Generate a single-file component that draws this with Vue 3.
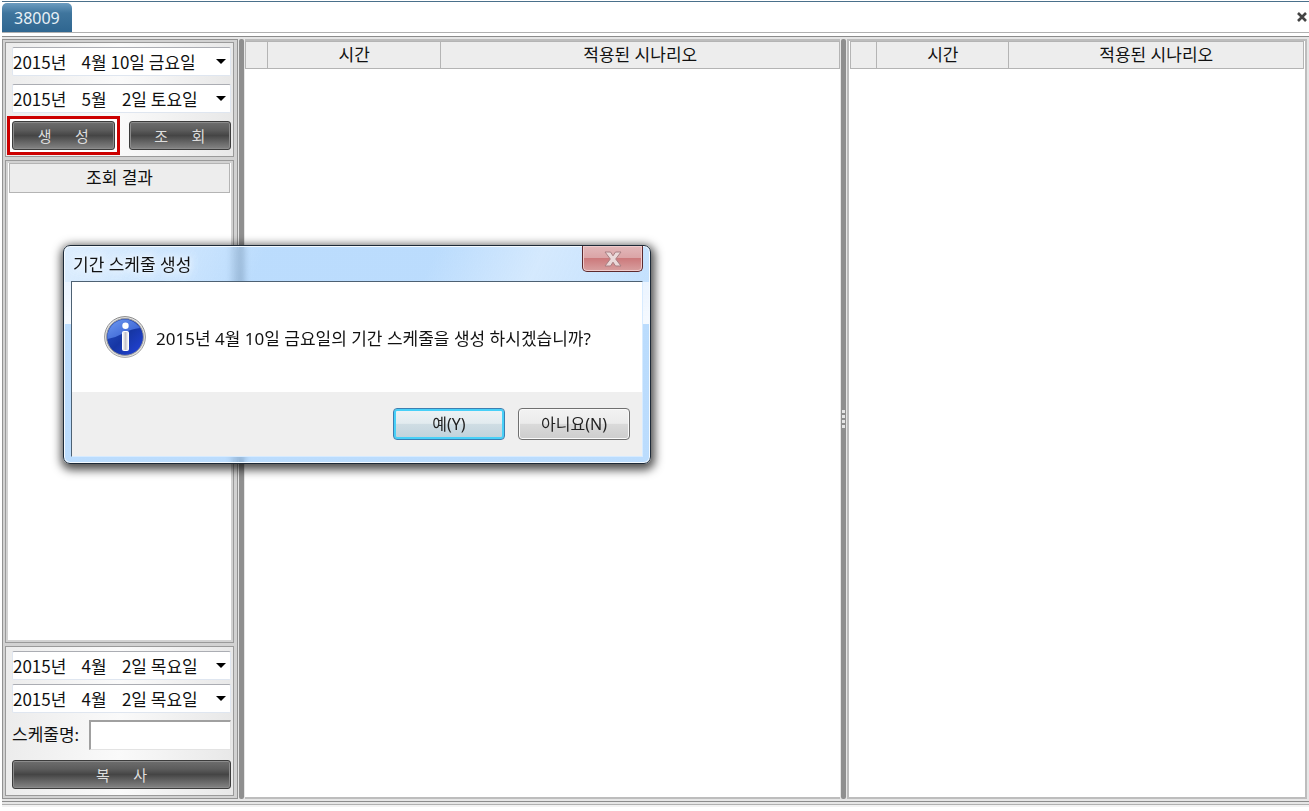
<script setup>
import { ref } from 'vue'

const nb = '\u00a0'
const fromDate = `2015년${nb.repeat(4)}4월${nb}10일${nb}금요일`
const toDate = `2015년${nb.repeat(4)}5월${nb.repeat(4)}2일${nb}토요일`
const copyDate = `2015년${nb.repeat(4)}4월${nb.repeat(4)}2일${nb}목요일`
const gap = nb.repeat(6)

const scheduleName = ref('')
</script>

<template>
  <div class="app">
    <header class="tabs">
      <button type="button" class="tabs__tab">38009</button>
      <button type="button" class="tabs__close" aria-label="닫기">
        <svg width="10" height="10" viewBox="0 0 10 10">
          <path d="M1 1l8 8M9 1L1 9" stroke="#444" stroke-width="2.6" />
        </svg>
      </button>
    </header>

    <main class="work">
      <aside class="side">
        <section class="panel panel--search">
          <select class="date" aria-label="시작일">
            <option>{{ fromDate }}</option>
          </select>
          <select class="date" aria-label="종료일">
            <option>{{ toDate }}</option>
          </select>
          <div class="panel__row">
            <button type="button" class="btn btn--marked">생{{ gap }}성</button>
            <button type="button" class="btn">조{{ gap }}회</button>
          </div>
        </section>

        <section class="result">
          <h2 class="result__title">조회 결과</h2>
        </section>

        <section class="panel panel--copy">
          <select class="date" aria-label="원본 날짜">
            <option>{{ copyDate }}</option>
          </select>
          <select class="date" aria-label="대상 날짜">
            <option>{{ copyDate }}</option>
          </select>
          <div class="name">
            <label for="schedule-name">스케줄명:</label>
            <input id="schedule-name" v-model="scheduleName" type="text" />
          </div>
          <button type="button" class="btn">복{{ gap }}사</button>
        </section>
      </aside>

      <div class="splitter"></div>

      <section class="grid grid--main">
        <table>
          <thead>
            <tr>
              <th class="grid__mark"></th>
              <th class="grid__time">시간</th>
              <th>적용된 시나리오</th>
            </tr>
          </thead>
        </table>
      </section>

      <div class="splitter">
        <i v-for="n in 4" :key="n" class="splitter__dot"></i>
      </div>

      <section class="grid grid--sub">
        <table>
          <thead>
            <tr>
              <th class="grid__mark"></th>
              <th class="grid__time">시간</th>
              <th>적용된 시나리오</th>
            </tr>
          </thead>
        </table>
      </section>
    </main>

    <div class="dialog" role="dialog" aria-labelledby="dialog-title">
      <div class="dialog__bar">
        <h1 id="dialog-title" class="dialog__title">기간 스케줄 생성</h1>
        <button type="button" class="dialog__close" aria-label="닫기">
          <svg width="18" height="16" viewBox="0 0 18 16">
            <path
              d="M1 1h5.500L9 4.800 11.500 1H17l-5.300 7L17 15h-5.500L9 11.200 6.500 15H1l5.300-7z"
              fill="#ead9d9"
              stroke="#a87f82"
              stroke-width="1"
            />
          </svg>
        </button>
      </div>
      <div class="dialog__body">
        <div class="dialog__message">
          <svg class="dialog__icon" width="42" height="42" viewBox="0 0 42 42">
            <defs>
              <linearGradient id="ring" x1="0" y1="0" x2="0" y2="1">
                <stop offset="0" stop-color="#8a8a8a" />
                <stop offset="1" stop-color="#a8a8a8" />
              </linearGradient>
              <linearGradient id="ball" x1="0" y1="0" x2="1" y2="1">
                <stop offset="0" stop-color="#2a55c8" />
                <stop offset="0.5" stop-color="#1636a4" />
                <stop offset="1" stop-color="#2344dc" />
              </linearGradient>
              <linearGradient id="shine" x1="0" y1="0" x2="1" y2="1">
                <stop offset="0" stop-color="#6f9af0" />
                <stop offset="1" stop-color="#2d55cc" />
              </linearGradient>
              <linearGradient id="stem" x1="0" y1="0" x2="1" y2="0">
                <stop offset="0" stop-color="#fff" />
                <stop offset="0.5" stop-color="#c4c4cc" />
                <stop offset="1" stop-color="#fff" />
              </linearGradient>
            </defs>
            <circle cx="21" cy="21" r="20.400" fill="#e4e4e4" stroke="url(#ring)" />
            <circle cx="21" cy="21" r="18.400" fill="url(#ball)" stroke="#9a9a9a" />
            <path d="M3.500 23A17.600 17.600 0 0 1 36 12Q27 13 20 17T3.500 23z" fill="url(#shine)" />
            <circle cx="21.500" cy="9.800" r="3.200" fill="#fff" />
            <rect x="18.500" y="15.500" width="6" height="19" rx="1" fill="url(#stem)" stroke="#fff" />
          </svg>
          <p>2015년 4월 10일 금요일의 기간 스케줄을 생성 하시겠습니까?</p>
        </div>
        <div class="dialog__actions">
          <button type="button" class="choice choice--default">예(Y)</button>
          <button type="button" class="choice">아니요(N)</button>
        </div>
      </div>
    </div>
  </div>
</template>

<style>
body {
  background: #fff;
}
</style>

<style scoped>
.app {
  position: relative;
  display: flex;
  flex-direction: column;
  box-sizing: border-box;
  height: 100vh;
  padding: 1px 0 9px 2px;
  overflow: hidden;
  font-family: 'Noto Sans', 'Noto Sans CJK KR', sans-serif;
  font-size: 17px;
  color: #111;
}

button,
select,
input {
  box-sizing: border-box;
  margin: 0;
  font: inherit;
}

.tabs {
  display: flex;
  align-items: flex-start;
  justify-content: space-between;
  height: 30px;
  border-top: 1px solid #4a708b;
  border-bottom: 1px solid #b0b0b0;
}

.tabs__tab {
  height: 29px;
  margin-top: 1px;
  padding: 0 12px;
  border: 0;
  border-radius: 5px 5px 0 0;
  background: linear-gradient(#6c9cc0, #3f759d 35%, #2f6690);
  font-size: 16px;
  color: #e8f0f6;
}

.tabs__close {
  display: flex;
  margin: 10px 2px 0 0;
  padding: 0;
  border: 0;
  background: none;
}

.work {
  flex: 1;
  display: flex;
  min-height: 0;
  margin-top: 3px;
  padding: 2px 2px 2px 0;
  border-top: 1px solid #8c8c8c;
  border-bottom: 1px solid #8c8c8c;
  background: #e6e6e6;
  box-shadow: 0 2px 0 #e6e6e6, 0 3px 0 #b0b0b0, 0 5px 0 #f2f2f2;
}

.side {
  display: flex;
  flex-direction: column;
  box-sizing: border-box;
  width: 236px;
  flex: none;
  gap: 3px;
  padding: 2px 3px 2px 2px;
  border: 1px solid #929292;
  background: #d2d2d2;
}

.panel {
  display: flex;
  flex-direction: column;
  border: 1px solid #9a9a9a;
  padding: 4px 2px 6px 6px;
  background: linear-gradient(90deg, #ececec, #fafafa 50%, #e8e8e8);
}

.panel--search {
  gap: 8px;
}

.panel--copy {
  gap: 4px;
}

.panel__row {
  display: grid;
  grid-template-columns: 1fr 1fr;
  gap: 14px;
}

.date {
  width: 100%;
  height: 29px;
  padding: 0;
  border: 1px solid #dfe6f0;
  border-top-color: #abadb3;
  border-radius: 2px;
  appearance: none;
  background: #fff
    url("data:image/svg+xml,%3Csvg xmlns='http://www.w3.org/2000/svg' width='10' height='5'%3E%3Cpath d='M0 0h10L5 5z'/%3E%3C/svg%3E")
    no-repeat right 4px center;
  font-family: 'Noto Sans CJK KR', sans-serif;
  color: #111;
}

.btn {
  position: relative;
  height: 29px;
  padding: 0;
  border: 1px solid #3c3c3c;
  border-radius: 3px;
  background: linear-gradient(#6e6e6e, #5c5c5c 30%, #454545 50%, #666 75%, #848484);
  box-shadow: inset 0 0 0 1px #8c8c8c;
  font-size: 15px;
  line-height: 24px;
  color: #ddd;
}

.btn--marked {
  box-shadow: inset 0 0 0 1px #8c8c8c, 0 0 0 3px #fff;
}

/* red frame round the create button */
.btn--marked::before {
  content: '';
  position: absolute;
  inset: -6px;
  border: 3px solid #c00;
}

.result {
  flex: 1;
  min-height: 0;
  padding: 2px 3px;
  border: 1px solid #9a9a9a;
  background: #fff;
  box-shadow: inset 0 0 0 2px #d2d2d2;
}

.result__title {
  margin: 0;
  border: 1px solid #b4b4b4;
  background: #ededed;
  font-size: 17px;
  font-weight: 400;
  line-height: 28px;
  text-align: center;
}

.name {
  display: flex;
  align-items: center;
  gap: 10px;
  margin: 3px 0 6px;
}

.name label {
  flex: none;
  line-height: 24px;
}

.name input {
  flex: 1;
  min-width: 0;
  height: 30px;
  border: 1px solid #e3e3e3;
  border-top: 2px solid #a0a0a0;
  border-left: 2px solid #a0a0a0;
  background: #fff;
}

.splitter {
  display: flex;
  flex: none;
  flex-direction: column;
  align-items: center;
  justify-content: center;
  gap: 2px;
  width: 5px;
  margin: 0 1px;
  border-radius: 2px;
  background: #8f8f8f;
}

.splitter__dot {
  width: 3px;
  height: 3px;
  background: #e6e6e6;
}

.grid {
  box-sizing: border-box;
  min-width: 0;
  border-top: 2px solid #bdbdbd;
  border-bottom: 2px solid #bdbdbd;
  background: #fff;
}

.grid--main {
  flex: 598;
}

.grid--sub {
  flex: 456;
  padding: 0 1px;
  border: 2px solid #bdbdbd;
}

.grid table {
  width: 100%;
  table-layout: fixed;
  border-collapse: collapse;
}

.grid th {
  height: 26px;
  padding: 0;
  border: 1px solid #b4b4b4;
  background: #ededed;
  font-weight: 400;
  line-height: 26px;
}

.grid__mark {
  width: 21px;
}

.grid__time {
  width: 29%;
}

.grid--sub .grid__mark {
  width: 25px;
}

.dialog {
  position: absolute;
  top: 245px;
  left: 63px;
  box-sizing: border-box;
  width: 588px;
  padding: 0 7px 6px;
  border: 1px solid #1d2a38;
  border-radius: 7px;
  background:
    linear-gradient(115deg, #ffffff80, #ffffff30 24%, #ffffff00 34%, #ffffff00 62%, #ffffff60 80%, #ffffff20) top / 100% 36px no-repeat,
    linear-gradient(#8ec5fc99, #8ec5fc99 36px, #e0eeffb0 36px, #f4f9ffd0 78px, #8ec5fc99 78px);
  backdrop-filter: blur(3px);
  box-shadow: inset 0 0 0 1px #f4faff, 1px 3px 10px 3px #000000b0;
}

.dialog__bar {
  display: flex;
  align-items: flex-start;
  justify-content: space-between;
  height: 35px;
}

.dialog__title {
  margin: 0;
  padding-left: 2px;
  font-size: 17px;
  font-weight: 400;
  line-height: 37px;
  text-shadow: 0 0 8px #fff, 0 0 8px #fff;
}

.dialog__close {
  display: flex;
  align-items: center;
  justify-content: center;
  width: 61px;
  height: 26px;
  padding: 0;
  border: 1px solid #5d2a2e;
  border-top: 0;
  border-radius: 0 0 5px 5px;
  background: linear-gradient(#e2b8ba, #dba4a6 48%, #cc7a7c 50%, #d8a0a0);
  box-shadow: inset 0 0 0 1px #f0cccc;
}

.dialog__close svg {
  flex: none;
}

.dialog__body {
  border: 1px solid #d7ebff;
  border-top-color: #4d6173;
  border-left-color: #4d6173;
  background: #efefef;
}

.dialog__message {
  display: flex;
  align-items: center;
  gap: 10px;
  height: 110px;
  padding-left: 32px;
  background: #fff;
}

.dialog__message p {
  margin: 0;
  white-space: nowrap;
}

.dialog__actions {
  display: flex;
  justify-content: flex-end;
  gap: 13px;
  padding: 16px 12px;
}

.choice {
  width: 112px;
  height: 32px;
  padding: 0;
  border: 1px solid #707070;
  border-radius: 4px;
  background: linear-gradient(#f2f2f2, #ebebeb 48%, #dadada 50%, #cdcdcd);
  box-shadow: inset 0 0 0 1px #fafafa;
  font-size: 16px;
  line-height: 28px;
  color: #222;
}

.choice--default {
  border-color: #3c7fb1;
  background: linear-gradient(#eef3f5, #e2ebef 48%, #cfdde4 50%, #c0d2db);
  box-shadow: inset 0 0 0 2px #48d0f8;
}
</style>
